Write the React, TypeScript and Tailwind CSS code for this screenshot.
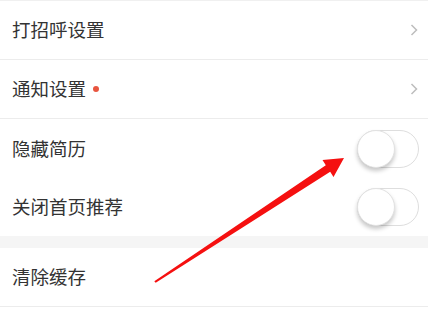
import React from 'react'

const font = { fontFamily: '"Noto Sans CJK SC", "Noto Sans", sans-serif' }

function Chevron() {
  return (
    <svg width="8" height="12" viewBox="0 0 8 12" className="mr-[10px]">
      <polyline points="1.5,1 6.5,6 1.5,11" fill="none" stroke="#bdbdbd" strokeWidth="1.5" />
    </svg>
  )
}

function Toggle() {
  return (
    <div className="w-[62px] h-[38px] rounded-full border border-[#dedede] bg-white relative mr-[9px]">
      <div className="absolute left-[-1px] top-[-1px] w-[38px] h-[38px] rounded-full bg-white border border-[#e2e2e2] shadow-[0_3px_4px_rgba(0,0,0,0.22)]" />
    </div>
  )
}

function Row({ label, right, dot }: { label: string; right: React.ReactNode; dot?: boolean }) {
  return (
    <div className="h-[59px] flex items-center justify-between border-b border-[#ececec]">
      <div className="flex items-center pl-3">
        <span className="text-[18.5px] text-[#333]">{label}</span>
        {dot && <span className="ml-[7px] w-[6px] h-[6px] rounded-full bg-[#e8553f]" />}
      </div>
      {right}
    </div>
  )
}

export default function App() {
  return (
    <div className="w-[428px] h-[311px] bg-white relative overflow-hidden" style={font}>
      <div className="border-t border-[#f0f0f0]">
        <Row label="打招呼设置" right={<Chevron />} />
        <Row label="通知设置" dot right={<Chevron />} />
        <div className="h-[59px] flex items-center justify-between">
          <span className="pl-3 text-[18.5px] text-[#333]">隐藏简历</span>
          <Toggle />
        </div>
        <div className="h-[58px] flex items-center justify-between">
          <span className="pl-3 text-[18.5px] text-[#333]">关闭首页推荐</span>
          <Toggle />
        </div>
        <div className="h-[12px] bg-[#f5f5f5]" />
        <Row label="清除缓存" right={null} />
      </div>
      <svg className="absolute left-0 top-0" width="428" height="311" viewBox="0 0 428 311">
        <polygon
          fill="#f51010"
          points="154.3,281.3 325.8,165.2 322.5,160.1 344,158 333.5,176.9 330.2,171.8 155.7,282.8"
        />
      </svg>
    </div>
  )
}
